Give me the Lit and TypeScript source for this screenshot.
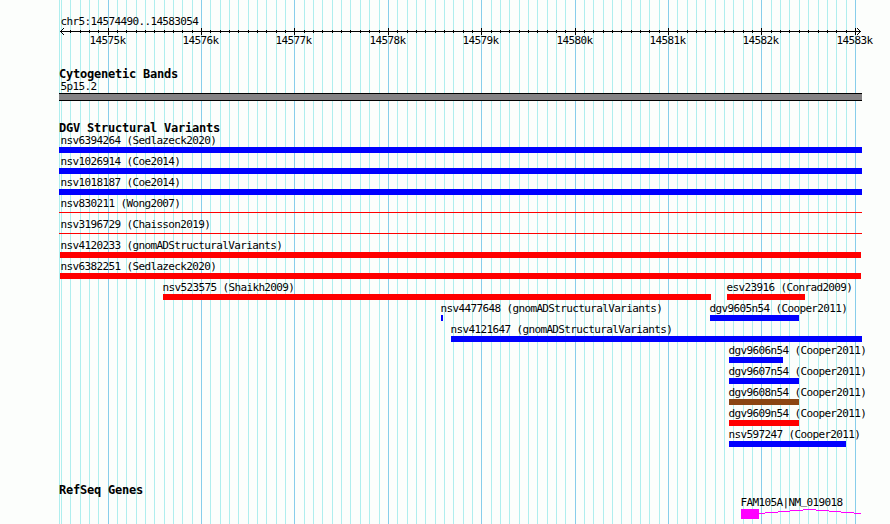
import { LitElement, html, svg, css } from "lit";
import { customElement, property } from "lit/decorators.js";

const WIDTH = 890;
const HEIGHT = 524;
const START = 14574490;
const PX_PER_BP = 800 / 8565;
const LEFT = 60.5;

const toX = (bp: number) => Math.floor(LEFT + (bp - START) * PX_PER_BP);

const GRID: number[] = [];
for (let bp = 14574500; bp <= 14583000; bp += 100) {
  GRID.push(bp);
}

interface Feature {
  name: string;
  x: number;
  end: number;
  color: string;
  labelX?: number;
  thin?: boolean;
}

const BLUE = "#0000ff";
const RED = "#ff0000";
const BROWN = "#8b4513";

const VARIANTS: Feature[][] = [
  [{ name: "nsv6394264 (Sedlazeck2020)", x: 59, end: 862, color: BLUE, labelX: 60.5 }],
  [{ name: "nsv1026914 (Coe2014)", x: 59, end: 862, color: BLUE, labelX: 60.5 }],
  [{ name: "nsv1018187 (Coe2014)", x: 59, end: 862, color: BLUE, labelX: 60.5 }],
  [{ name: "nsv830211 (Wong2007)", x: 59, end: 862, color: RED, labelX: 60.5, thin: true }],
  [{ name: "nsv3196729 (Chaisson2019)", x: 59, end: 862, color: RED, labelX: 60.5, thin: true }],
  [{ name: "nsv4120233 (gnomADStructuralVariants)", x: 60, end: 861, color: RED, labelX: 60.5 }],
  [{ name: "nsv6382251 (Sedlazeck2020)", x: 60, end: 861, color: RED, labelX: 60.5 }],
  [
    { name: "nsv523575 (Shaikh2009)", x: 163, end: 711, color: RED },
    { name: "esv23916 (Conrad2009)", x: 727, end: 805, color: RED },
  ],
  [
    { name: "nsv4477648 (gnomADStructuralVariants)", x: 441, end: 443, color: BLUE },
    { name: "dgv9605n54 (Cooper2011)", x: 710, end: 799, color: BLUE },
  ],
  [{ name: "nsv4121647 (gnomADStructuralVariants)", x: 451, end: 862, color: BLUE }],
  [{ name: "dgv9606n54 (Cooper2011)", x: 729, end: 783, color: BLUE }],
  [{ name: "dgv9607n54 (Cooper2011)", x: 729, end: 799, color: BLUE }],
  [{ name: "dgv9608n54 (Cooper2011)", x: 729, end: 799, color: BROWN }],
  [{ name: "dgv9609n54 (Cooper2011)", x: 729, end: 799, color: RED }],
  [{ name: "nsv597247 (Cooper2011)", x: 729, end: 846, color: BLUE }],
];

// the intron climbs one pixel per step up to the middle, then back down
const INTRON = [759, 765, 778, 790, 803, 816, 829, 841, 854, 861];

@customElement("browser-grid")
export class BrowserGrid extends LitElement {
  static styles = css`
    :host {
      display: block;
    }

    svg {
      display: block;
    }
  `;

  render() {
    return html`<svg width=${WIDTH} height=${HEIGHT} shape-rendering="crispEdges">
      <rect x="59" y="0" width="1" height=${HEIGHT} fill="#afeeee"></rect>
      ${GRID.map(
        (bp) => svg`<rect x=${toX(bp)} y="0" width="1" height=${HEIGHT}
          fill=${bp % 1000 === 0 ? "#87ceeb" : "#afeeee"}></rect>`
      )}
    </svg>`;
  }
}

@customElement("scale-ruler")
export class ScaleRuler extends LitElement {
  static styles = css`
    :host {
      display: block;
      height: 23px;
    }

    svg {
      display: block;
    }

    text {
      font-family: "DejaVu Sans Mono", "Liberation Mono", monospace;
      font-size: 11px;
      letter-spacing: -0.62px;
    }
  `;

  render() {
    return html`<svg width=${WIDTH} height="23">
      <g shape-rendering="crispEdges">
        <rect x="60" y="4" width="801" height="1"></rect>
        ${GRID.map((bp) =>
          bp % 1000 === 0
            ? svg`<rect x=${toX(bp)} y="1" width="1" height="7"></rect>`
            : svg`<rect x=${toX(bp)} y="3" width="1" height="3"></rect>`
        )}
      </g>
      <path d="M64 1 L60.5 4.5 L64 8 M857 1 L860.5 4.5 L857 8" fill="none" stroke="#000"></path>
      ${GRID.filter((bp) => bp % 1000 === 0).map(
        (bp) => svg`<text x=${toX(bp) - 18.5} y="17">${bp / 1000}k</text>`
      )}
    </svg>`;
  }
}

@customElement("feature-row")
export class FeatureRow extends LitElement {
  @property({ attribute: false }) features: Feature[] = [];

  static styles = css`
    :host {
      display: grid;
      height: 21px;
    }

    .feature {
      grid-area: 1 / 1;
      justify-self: start;
    }

    .label {
      height: 13px;
      line-height: 13px;
      white-space: pre;
    }

    .bar {
      height: 6px;
    }

    .thin {
      height: 1px;
      margin-top: 2px;
    }
  `;

  render() {
    return this.features.map(
      (f) => html`<div class="feature" style="margin-left: ${f.x}px">
        <div class="label" style="margin-left: ${(f.labelX ?? f.x - 0.5) - f.x}px">${f.name}</div>
        <div class="bar ${f.thin ? "thin" : ""}" style="width: ${f.end - f.x}px; background: ${f.color}"></div>
      </div>`
    );
  }
}

@customElement("app-root")
export class AppRoot extends LitElement {
  static styles = css`
    :host {
      display: grid;
      width: 890px;
      height: 524px;
      overflow: hidden;
      background: #fcfefc;
      color: #000;
      font-family: "DejaVu Sans Mono", "Liberation Mono", monospace;
      font-size: 11px;
      letter-spacing: -0.63px;
    }

    browser-grid,
    .tracks {
      grid-area: 1 / 1;
    }

    .tracks {
      z-index: 1;
      min-width: 0;
    }

    .region {
      height: 12px;
      line-height: 13px;
      padding: 15px 0 0 60.5px;
    }

    h2 {
      margin: 0;
      padding-left: 59px;
      height: 13px;
      line-height: 14px;
      font-size: 12px;
      font-weight: bold;
      letter-spacing: -0.22px;
    }

    .cyto {
      padding-top: 17px;
    }

    .band-name {
      height: 13px;
      line-height: 13px;
      padding-left: 60.5px;
    }

    .band {
      box-sizing: border-box;
      width: 803px;
      height: 8px;
      margin-left: 59px;
      border: solid #000;
      border-width: 1px 0;
      background: #848284;
    }

    .variants {
      padding-top: 20px;
    }

    .genes {
      padding-top: 34px;
    }

    .gene-name {
      height: 13px;
      line-height: 13px;
      padding-left: 740.5px;
    }

    /* keeps the underscore clear of the intron line */
    .underscore {
      line-height: 0;
      vertical-align: 2px;
    }

    .gene {
      display: block;
    }
  `;

  render() {
    return html`
      <browser-grid></browser-grid>
      <div class="tracks">
        <div class="region">chr5:14574490..14583054</div>
        <scale-ruler></scale-ruler>
        <section class="cyto">
          <h2>Cytogenetic Bands</h2>
          <div class="band-name">5p15.2</div>
          <div class="band"></div>
        </section>
        <section class="variants">
          <h2>DGV Structural Variants</h2>
          ${VARIANTS.map((row) => html`<feature-row .features=${row}></feature-row>`)}
        </section>
        <section class="genes">
          <h2>RefSeq Genes</h2>
          <div class="gene-name">FAM105A|NM<span class="underscore">_</span>019018</div>
          <svg class="gene" width=${WIDTH} height="15" fill="#ff00ff" shape-rendering="crispEdges">
            <rect x="741" y="0" width="18" height="10"></rect>
            ${INTRON.slice(1).map(
              (end, i) => svg`<rect x=${INTRON[i]} y=${Math.abs(i - 4)}
                width=${end - INTRON[i]} height="1"></rect>`
            )}
          </svg>
        </section>
      </div>
    `;
  }
}
